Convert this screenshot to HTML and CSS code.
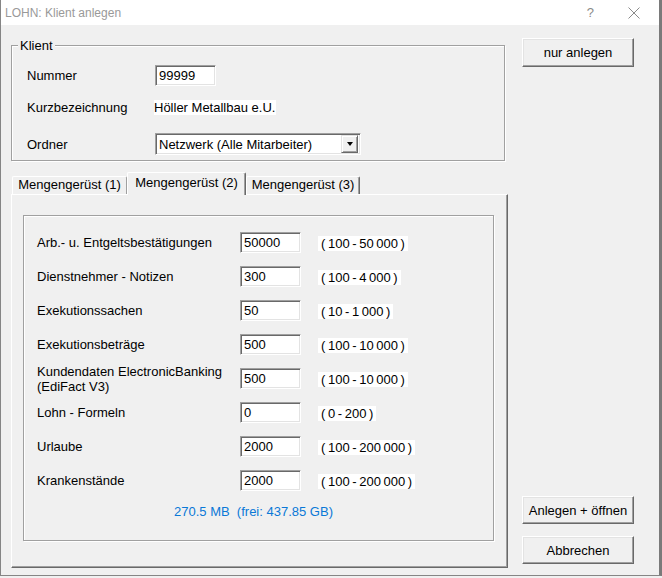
FILE: index.html
```html
<!DOCTYPE html>
<html lang="de">
<head>
<meta charset="utf-8">
<title>LOHN: Klient anlegen</title>
<link rel="stylesheet" href="styles.css">
</head>
<body>
<div class="window">
  <div class="titlebar">
    <span class="title">LOHN: Klient anlegen</span>
    <span class="help">?</span>
    <svg class="close" width="12" height="12" viewBox="0 0 12 12"><path d="M0.5 0.5 L11.5 11.5 M11.5 0.5 L0.5 11.5" stroke="#8a8a8a" stroke-width="1" fill="none"/></svg>
  </div>
  <div class="content">
    <div class="main">
      <fieldset class="group klient">
        <legend>Klient</legend>
        <div class="klient-rows">
          <div class="krow r1">
            <span class="klabel">Nummer</span>
            <span class="edit num">99999</span>
          </div>
          <div class="krow r2">
            <span class="klabel">Kurzbezeichnung</span>
            <span class="static">Höller Metallbau e.U.</span>
          </div>
          <div class="krow r3">
            <span class="klabel">Ordner</span>
            <span class="combo">
              <span class="combo-text">Netzwerk (Alle Mitarbeiter)</span>
              <span class="combo-btn"><span class="tri"></span></span>
            </span>
          </div>
        </div>
      </fieldset>

      <div class="tabs">
        <div class="tab t1">Mengengerüst (1)</div>
        <div class="tab t2 active">Mengengerüst (2)</div>
        <div class="tab t3">Mengengerüst (3)</div>
      </div>

      <div class="panel">
        <div class="group inner">
          <div class="rows">
            <span class="lbl">Arb.- u. Entgeltsbestätigungen</span><span class="edit">50000</span><span class="range">( 100 - 50 000 )</span>
            <span class="lbl">Dienstnehmer - Notizen</span><span class="edit">300</span><span class="range">( 100 - 4 000 )</span>
            <span class="lbl">Exekutionssachen</span><span class="edit">50</span><span class="range">( 10 - 1 000 )</span>
            <span class="lbl">Exekutionsbeträge</span><span class="edit">500</span><span class="range">( 100 - 10 000 )</span>
            <span class="lbl two">Kundendaten ElectronicBanking<br>(EdiFact V3)</span><span class="edit">500</span><span class="range">( 100 - 10 000 )</span>
            <span class="lbl">Lohn - Formeln</span><span class="edit">0</span><span class="range">( 0 - 200 )</span>
            <span class="lbl">Urlaube</span><span class="edit">2000</span><span class="range">( 100 - 200 000 )</span>
            <span class="lbl">Krankenstände</span><span class="edit">2000</span><span class="range">( 100 - 200 000 )</span>
          </div>
          <div class="size">270.5 MB&nbsp; (frei: 437.85 GB)</div>
        </div>
      </div>
    </div>

    <div class="side">
      <button class="btn first">nur anlegen</button>
      <button class="btn open">Anlegen + öffnen</button>
      <button class="btn">Abbrechen</button>
    </div>
  </div>
</div>
</body>
</html>
```

FILE: styles.css
```css
html, body {
  margin: 0;
  padding: 0;
  background: #f0f0f0;
}

body {
  font-family: "Liberation Sans", Arial, sans-serif;
  font-size: 13px;
  color: #000;
}

.window {
  width: 662px;
  height: 576px;
  box-sizing: border-box;
  border-left: 1px solid #858585;
  border-right: 3px solid #7a7a7a;
  border-bottom: 1px solid #858585;
  background: #f0f0f0;
  display: flex;
  flex-direction: column;
}

/* title bar */
.titlebar {
  height: 25px;
  flex: none;
  background: #fff;
  display: flex;
  align-items: center;
  padding-left: 4px;
}

.title {
  flex: 1;
  color: #999;
  font-size: 12px;
}

.help {
  color: #8a8a8a;
  font-size: 13px;
  margin-right: 34px;
}

.close {
  margin-right: 19px;
  display: block;
}

/* content */
.content {
  flex: 1;
  display: flex;
  padding: 13px 0 7px 10px;
  min-height: 0;
}

.main {
  width: 497px;
  display: flex;
  flex-direction: column;
}

/* etched group boxes */
.group {
  border: 1px solid #a0a0a0;
  box-shadow: inset 1px 1px 0 #fff, 1px 1px 0 #fff;
}

.klient {
  width: 494px;
  box-sizing: border-box;
  margin: 0;
  padding: 12px 0 5px 6px;
  min-inline-size: 0;
}

.klient legend {
  padding: 0 2px;
  line-height: 15px;
  font-size: 13px;
  background: #f0f0f0;
}

.klient-rows {
  margin-left: 9px;
  display: flex;
  flex-direction: column;
}

.krow {
  display: flex;
  align-items: center;
}

.r1 { height: 21px; }
.r2 { height: 22px; margin-top: 10px; }
.r3 { height: 22px; margin-top: 15px; }

.klabel {
  width: 128px;
  flex: none;
}

.edit {
  box-sizing: border-box;
  width: 61px;
  height: 21px;
  background: #fff;
  border: 1px solid;
  border-color: #a0a0a0 #fff #fff #a0a0a0;
  box-shadow: inset 1px 1px 0 #696969, inset -1px -1px 0 #e3e3e3;
  padding: 1px 0 0 3px;
  line-height: 18px;
  font-size: 13px;
  display: block;
}

.static {
  background: #fff;
  line-height: 15px;
  margin-left: -1px;
  padding: 0 1px 0 0;
}

.combo {
  box-sizing: border-box;
  width: 206px;
  height: 22px;
  background: #fff;
  border: 1px solid;
  border-color: #a0a0a0 #fff #fff #a0a0a0;
  box-shadow: inset 1px 1px 0 #696969, inset -1px -1px 0 #e3e3e3;
  display: flex;
  align-items: center;
  padding: 2px 2px 2px 3px;
}

.combo-text {
  flex: 1;
  padding-top: 1px;
}

.combo-btn {
  width: 17px;
  height: 18px;
  box-sizing: border-box;
  background: #f0f0f0;
  border: 1px solid;
  border-color: #e3e3e3 #696969 #696969 #e3e3e3;
  box-shadow: inset 1px 1px 0 #fff, inset -1px -1px 0 #a0a0a0;
  display: flex;
  align-items: center;
  justify-content: center;
}

.tri {
  width: 0;
  height: 0;
  border-left: 3.5px solid transparent;
  border-right: 3.5px solid transparent;
  border-top: 4px solid #000;
}

/* tabs */
.tabs {
  margin-top: 11px;
  height: 22px;
  display: flex;
  align-items: flex-end;
  flex: none;
}

.tab {
  box-sizing: border-box;
  height: 18px;
  line-height: 16px;
  text-align: center;
  background: #f0f0f0;
  border-top: 1px solid #fff;
  border-left: 1px solid #fff;
  border-right: 1px solid #696969;
  box-shadow: inset -1px 0 0 #a0a0a0;
  border-radius: 2px 2px 0 0;
  white-space: nowrap;
}

.t1 { width: 115px; margin-left: 1px; border-right-color: #a0a0a0; box-shadow: none; }
.t2 { width: 119px; }
.t3 { width: 114px; }

.tab.active {
  height: 23px;
  margin-bottom: -1px;
  position: relative;
  z-index: 1;
  line-height: 19px;
  padding-bottom: 2px;
}

/* panel */
.panel {
  flex: 1;
  box-sizing: border-box;
  border-top: 1px solid #fff;
  border-left: 1px solid #fff;
  border-right: 1px solid #696969;
  border-bottom: 1px solid #696969;
  box-shadow: inset -1px -1px 0 #a0a0a0;
  padding: 20px 0 0 11px;
}

.inner {
  width: 471px;
  box-sizing: border-box;
  padding: 16px 0 21px 13px;
}

.rows {
  display: grid;
  grid-template-columns: 186px 61px auto;
  grid-auto-rows: 21px;
  row-gap: 13px;
  column-gap: 17px;
  align-items: center;
  justify-items: start;
}

.lbl {
  line-height: 15px;
}

.range {
  background: #fff;
  line-height: 15px;
  padding: 0 3px;
  margin-top: 1px;
  word-spacing: -1px;
}

.size {
  margin-top: 13px;
  line-height: 15px;
  padding-left: 137px;
  color: #0a78d7;
}

/* side buttons */
.side {
  margin-left: 14px;
  width: 112px;
  display: flex;
  flex-direction: column;
  padding-bottom: 4px;
}

.btn {
  box-sizing: border-box;
  width: 112px;
  height: 28px;
  font-family: "Liberation Sans", Arial, sans-serif;
  font-size: 13px;
  color: #000;
  background: #f0f0f0;
  border: 1px solid;
  border-color: #fff #696969 #696969 #fff;
  box-shadow: inset -1px -1px 0 #a0a0a0, inset 1px 1px 0 #e3e3e3;
  padding: 0;
  border-radius: 0;
}

.btn.first {
  height: 29px;
}

.btn.open {
  margin-top: auto;
  margin-bottom: 12px;
}
```
